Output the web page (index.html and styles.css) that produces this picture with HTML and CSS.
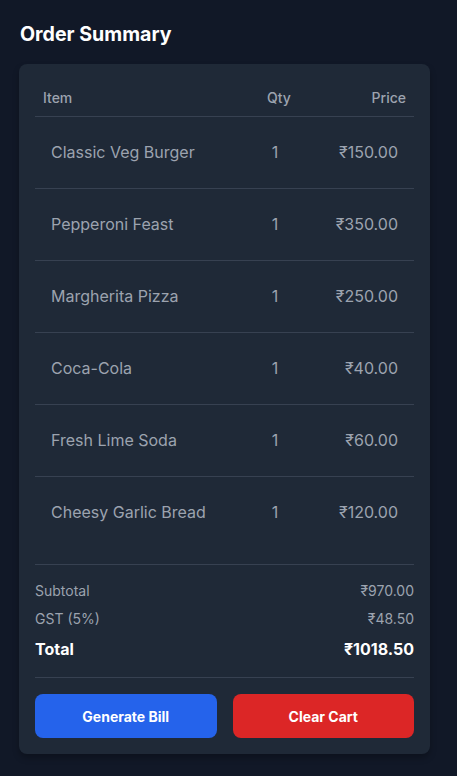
FILE: index.html
```html
<!DOCTYPE html>
<html>
<head>
<meta charset="utf-8">
<link rel="stylesheet" href="styles.css">
</head>
<body>
<div class="page">
  <h1 class="title">Order Summary</h1>
  <div class="card">
    <div class="thead">
      <div class="th th-item">Item</div>
      <div class="th th-qty">Qty</div>
      <div class="th th-price">Price</div>
    </div>
    <div class="tbody">
      <div class="tr"><div class="td td-item">Classic Veg Burger</div><div class="td td-qty">1</div><div class="td td-price">₹150.00</div></div>
      <div class="tr"><div class="td td-item">Pepperoni Feast</div><div class="td td-qty">1</div><div class="td td-price">₹350.00</div></div>
      <div class="tr"><div class="td td-item">Margherita Pizza</div><div class="td td-qty">1</div><div class="td td-price">₹250.00</div></div>
      <div class="tr"><div class="td td-item">Coca-Cola</div><div class="td td-qty">1</div><div class="td td-price">₹40.00</div></div>
      <div class="tr"><div class="td td-item">Fresh Lime Soda</div><div class="td td-qty">1</div><div class="td td-price">₹60.00</div></div>
      <div class="tr"><div class="td td-item">Cheesy Garlic Bread</div><div class="td td-qty">1</div><div class="td td-price">₹120.00</div></div>
    </div>
    <div class="totals">
      <div class="line"><span>Subtotal</span><span>₹970.00</span></div>
      <div class="line"><span>GST (5%)</span><span>₹48.50</span></div>
      <div class="line total"><span>Total</span><span>₹1018.50</span></div>
    </div>
    <div class="actions">
      <button class="btn btn-blue">Generate Bill</button>
      <button class="btn btn-red">Clear Cart</button>
    </div>
  </div>
</div>
</body>
</html>
```

FILE: styles.css
```css
* { box-sizing: border-box; }
html, body { margin: 0; padding: 0; }
body {
  background: #111827;
  font-family: Inter, "Noto Sans", sans-serif;
  color: #9ca3af;
  width: 457px;
  height: 776px;
  overflow: hidden;
}
.page {
  padding: 20px 27px 20px 19px;
}
.title {
  margin: 0 0 16px 1px;
  font-size: 19.6px;
  line-height: 28px;
  font-weight: 700;
  color: #ffffff;
}
.card {
  background: #1f2937;
  border-radius: 8px;
  padding: 16px;
  box-shadow: 0 4px 6px rgba(0,0,0,0.25);
}
.thead, .tr {
  display: grid;
  grid-template-columns: 1fr 70px 104px;
}
.thead {
  border-bottom: 1px solid #374151;
}
.th {
  font-size: 14px;
  line-height: 20px;
  padding: 8px;
  font-weight: 500;
  color: #9ca3af;
}
.th-qty { text-align: center; padding-left: 8px; padding-right: 0; }
.th-price { text-align: right; }
.tr { border-bottom: 1px solid #374151; }
.tr:last-child { border-bottom: none; }
.td {
  font-size: 16px;
  line-height: 24px;
  padding: 23px 16px 24px;
  color: #9ca3af;
  white-space: nowrap;
}
.td-qty { text-align: center; padding-left: 0; padding-right: 0; }
.td-price { text-align: right; }
.totals {
  margin-top: 16px;
  border-top: 1px solid #374151;
  padding-top: 16px;
  padding-bottom: 16px;
  display: flex;
  flex-direction: column;
  gap: 8px;
}
.line {
  display: flex;
  justify-content: space-between;
  font-size: 14px;
  line-height: 20px;
  color: #9ca3af;
}
.line.total {
  font-size: 16px;
  line-height: 24px;
  font-weight: 700;
  color: #ffffff;
}
.actions {
  border-top: 1px solid #374151;
  padding-top: 16px;
  display: grid;
  grid-template-columns: 1fr 1fr;
  gap: 16px;
}
.btn {
  border: none;
  border-radius: 8px;
  height: 44px;
  font-family: Inter, "Noto Sans", sans-serif;
  font-size: 14px;
  font-weight: 700;
  color: #ffffff;
  cursor: pointer;
}
.btn-blue { background: #2563eb; }
.btn-red { background: #dc2626; }
```
